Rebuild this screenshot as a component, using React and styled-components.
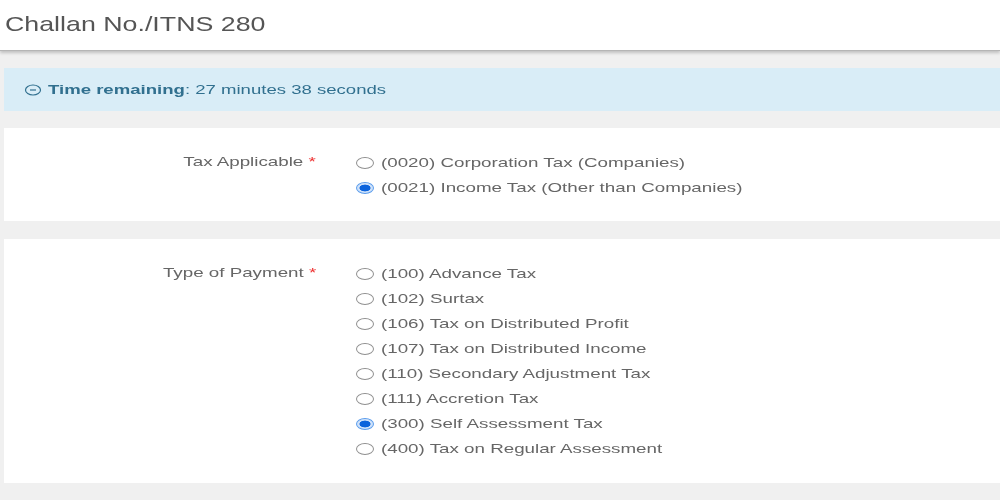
import React from 'react';
import styled, { createGlobalStyle } from 'styled-components';

const GlobalStyle = createGlobalStyle`
  html, body {
    margin: 0;
    padding: 0;
    background: #f0f0f0;
    font-family: "Liberation Sans", Arial, sans-serif;
    overflow: hidden;
  }
`;

const Page = styled.div`
  width: 1000px;
  height: 500px;
  overflow: hidden;
  background: #f0f0f0;
`;

const Header = styled.header`
  height: 51px;
  box-sizing: border-box;
  padding: 12px 0 0 5px;
  background: #fff;
  border-bottom: 1px solid #b5b5b5;
  box-shadow: 0 2px 3px rgba(0, 0, 0, 0.2);
`;

// the whole screenshot is stretched sideways, so text gets the same stretch
const Wide = styled.span`
  display: inline-block;
  white-space: nowrap;
  transform: scaleX(${(p) => p.$scale || 1.443});
  transform-origin: ${(p) => (p.$right ? 'right' : 'left')} center;
  filter: blur(0.4px);
`;

const Title = styled.h1`
  margin: 0;
  font-size: 21px;
  line-height: 24px;
  font-weight: 400;
  color: #555;
`;

const Content = styled.main`
  display: flex;
  flex-direction: column;
  padding: 17px 0 0 4px;
`;

const Alert = styled.div`
  display: flex;
  align-items: center;
  gap: 6px;
  height: 43px;
  padding-left: 20px;
  margin-bottom: 17px;
  background: #d9edf7;
  color: #31708f;
  font-size: 12.5px;
`;

const Card = styled.section`
  display: grid;
  grid-template-columns: 312px 1fr;
  height: ${(p) => p.$height}px;
  box-sizing: border-box;
  padding-top: 21px;
  margin-bottom: 18px;
  background: #fff;
`;

const Label = styled.div`
  text-align: right;
  font-size: 13px;
  line-height: 25px;
  color: #666;
`;

const Required = styled.span`
  color: #e33;
`;

const Options = styled.div`
  display: flex;
  flex-direction: column;
  padding: 1px 0 0 40px;
`;

const Option = styled.label`
  display: flex;
  align-items: center;
  gap: 7px;
  height: 25.05px;
  font-size: 13px;
  color: #666;
`;

const Radio = styled.input.attrs({ type: 'radio', readOnly: true })`
  appearance: none;
  width: 18px;
  height: 12px;
  margin: 1px 0 0;
  box-sizing: border-box;
  border-radius: 50%;
  border: 1px solid ${(p) => (p.checked ? '#5a9cec' : '#8f8f8f')};
  background: ${(p) => (p.checked ? 'radial-gradient(ellipse at center, #0b63dc 45%, #cfe2fa 52%)' : '#fff')};
  filter: blur(0.3px);
`;

const ClockIcon = () => (
  <svg width="18" height="12" viewBox="0 0 18 12" fill="none" stroke="#31708f" strokeWidth="1.2">
    <ellipse cx="9" cy="6" rx="7.5" ry="5" />
    <path d="M6 6H12" />
  </svg>
);

const taxOptions = [
  { label: '(0020) Corporation Tax (Companies)' },
  { label: '(0021) Income Tax (Other than Companies)', checked: true },
];

const paymentOptions = [
  { label: '(100) Advance Tax' },
  { label: '(102) Surtax' },
  { label: '(106) Tax on Distributed Profit' },
  { label: '(107) Tax on Distributed Income' },
  { label: '(110) Secondary Adjustment Tax' },
  { label: '(111) Accretion Tax' },
  { label: '(300) Self Assessment Tax', checked: true },
  { label: '(400) Tax on Regular Assessment' },
];

const RadioGroup = ({ name, items }) => (
  <Options>
    {items.map((item) => (
      <Option key={item.label}>
        <Radio name={name} checked={!!item.checked} />
        <Wide>{item.label}</Wide>
      </Option>
    ))}
  </Options>
);

export default function App() {
  return (
    <Page>
      <GlobalStyle />
      <Header>
        <Title>
          <Wide $scale={1.275}>Challan No./ITNS 280</Wide>
        </Title>
      </Header>
      <Content>
        <Alert>
          <ClockIcon />
          <Wide $scale={1.485}>
            <strong>Time remaining</strong>: 27 minutes 38 seconds
          </Wide>
        </Alert>
        <Card $height={93}>
          <Label>
            <Wide $right>
              Tax Applicable <Required>*</Required>
            </Wide>
          </Label>
          <RadioGroup name="tax" items={taxOptions} />
        </Card>
        <Card $height={244}>
          <Label>
            <Wide $right>
              Type of Payment <Required>*</Required>
            </Wide>
          </Label>
          <RadioGroup name="payment" items={paymentOptions} />
        </Card>
      </Content>
    </Page>
  );
}
